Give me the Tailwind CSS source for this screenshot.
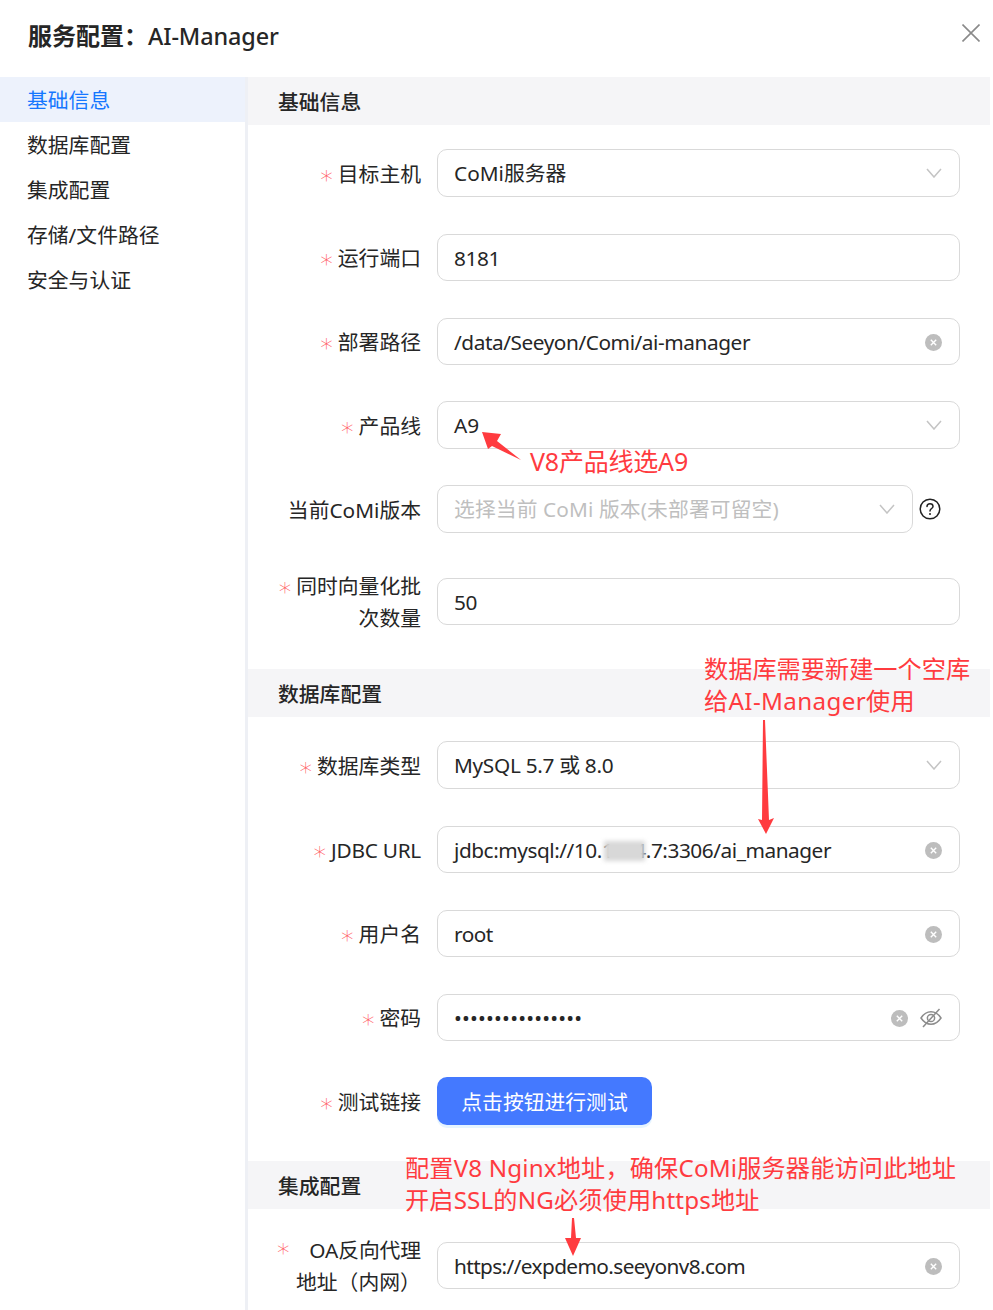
<!DOCTYPE html>
<html lang="zh-CN">
<head>
<meta charset="utf-8">
<script src="https://cdn.jsdelivr.net/npm/@tailwindcss/browser@4"></script>
</head>
<body class="bg-white">
<div class="relative w-[993px] h-[1310px] overflow-hidden bg-white text-[20.8px] leading-[32px] text-[#262626] font-['Noto_Sans','Noto_Sans_CJK_SC',sans-serif]">
  <header class="h-[77px] flex items-center justify-between pl-[28px] pr-[13px]">
    <h1 class="text-[24px] font-semibold leading-[32px] text-[#262626] -mt-[5px]">服务配置：<span class="font-medium tracking-[-0.1px] text-[23.4px]">AI-Manager</span></h1>
    <svg class="w-[18px] h-[18px] -mt-[11px]" viewBox="0 0 18 18" fill="none" stroke="#8a8a8a" stroke-width="1.6"><path d="M0.5 0.5 17.5 17.5M17.5 0.5 0.5 17.5"/></svg>
  </header>
  <div class="flex h-[1233px]">
    <nav class="w-[248px] shrink-0 border-r-[3px] border-[#eef0f5]">
      <a class="flex items-center h-[45px] pl-[27px] bg-[#edf2fc] text-[#1677ff]">基础信息</a>
      <a class="flex items-center h-[45px] pl-[27px]">数据库配置</a>
      <a class="flex items-center h-[45px] pl-[27px]">集成配置</a>
      <a class="flex items-center h-[45px] pl-[27px]">存储/文件路径</a>
      <a class="flex items-center h-[45px] pl-[27px]">安全与认证</a>
    </nav>
    <main class="w-[742px] shrink-0">
      <h2 class="h-[48px] flex items-center pl-[30px] pt-[2px] bg-[#f5f5f7] font-medium text-[20.8px]">基础信息</h2>

      <div class="flex items-center h-[48px] mt-[24px]">
        <label class="w-[173px] pt-[1px] text-right"><span class="relative top-[6px] font-['DejaVu_Sans'] text-[25px] font-light leading-none text-[#ff5a5f] mr-[5px]">*</span>目标主机</label>
        <div class="ml-[16px] w-[523px] h-full flex items-center justify-between px-[16px] border border-[#d9d9d9] rounded-[10px]">
          <span>CoMi服务器</span>
          <svg class="w-[16px] h-[10px] mr-[1px]" viewBox="0 0 16 10" fill="none" stroke="#c4c4c4" stroke-width="1.5"><path d="M1 1 8 9 15 1"/></svg>
        </div>
      </div>

      <div class="flex items-center h-[47px] mt-[37px]">
        <label class="w-[173px] pt-[1px] text-right"><span class="relative top-[6px] font-['DejaVu_Sans'] text-[25px] font-light leading-none text-[#ff5a5f] mr-[5px]">*</span>运行端口</label>
        <div class="ml-[16px] w-[523px] h-full flex items-center px-[16px] border border-[#d9d9d9] rounded-[10px] tracking-[-0.4px]">8181</div>
      </div>

      <div class="flex items-center h-[47px] mt-[37px]">
        <label class="w-[173px] pt-[1px] text-right"><span class="relative top-[6px] font-['DejaVu_Sans'] text-[25px] font-light leading-none text-[#ff5a5f] mr-[5px]">*</span>部署路径</label>
        <div class="ml-[16px] w-[523px] h-full flex items-center justify-between px-[16px] border border-[#d9d9d9] rounded-[10px]">
          <span class="tracking-[-0.43px]">/data/Seeyon/Comi/ai-manager</span>
          <svg class="w-[17px] h-[17px] mr-[1px] mt-[1px]" viewBox="0 0 17 17"><circle cx="8.5" cy="8.5" r="8.5" fill="#bdbdbd"/><path d="M5.8 5.8 11.2 11.2M11.2 5.8 5.8 11.2" stroke="#fff" stroke-width="1.4"/></svg>
        </div>
      </div>

      <div class="flex items-center h-[48px] mt-[36px]">
        <label class="w-[173px] pt-[1px] text-right"><span class="relative top-[6px] font-['DejaVu_Sans'] text-[25px] font-light leading-none text-[#ff5a5f] mr-[5px]">*</span>产品线</label>
        <div class="ml-[16px] w-[523px] h-full flex items-center justify-between px-[16px] border border-[#d9d9d9] rounded-[10px]">
          <span>A9</span>
          <svg class="w-[16px] h-[10px] mr-[1px]" viewBox="0 0 16 10" fill="none" stroke="#c4c4c4" stroke-width="1.5"><path d="M1 1 8 9 15 1"/></svg>
        </div>
      </div>

      <div class="flex items-center h-[48px] mt-[36px]">
        <label class="w-[173px] pt-[1px] text-right">当前CoMi版本</label>
        <div class="ml-[16px] w-[476px] h-full flex items-center justify-between px-[16px] border border-[#d9d9d9] rounded-[10px]">
          <span class="text-[#bfbfbf] tracking-[0.1px]">选择当前 CoMi 版本(未部署可留空)</span>
          <svg class="w-[16px] h-[10px] mr-[1px]" viewBox="0 0 16 10" fill="none" stroke="#c4c4c4" stroke-width="1.5"><path d="M1 1 8 9 15 1"/></svg>
        </div>
        <svg class="ml-[6px] w-[22px] h-[22px]" viewBox="0 0 22 22" fill="none" stroke="#222" stroke-width="1.5"><circle cx="11" cy="11" r="9.8"/><path d="M8 8.6C8 6.8 9.4 5.8 11 5.8S14 6.9 14 8.4C14 10.4 11 10.6 11 13" stroke-linecap="round"/><circle cx="11" cy="16" r="1" fill="#222" stroke="none"/></svg>
      </div>

      <div class="flex items-center h-[47px] mt-[45px]">
        <label class="w-[173px] text-right"><span class="relative top-[6px] font-['DejaVu_Sans'] text-[25px] font-light leading-none text-[#ff5a5f] mr-[5px]">*</span>同时向量化批<br>次数量</label>
        <div class="ml-[16px] w-[523px] h-full flex items-center px-[16px] border border-[#d9d9d9] rounded-[10px] tracking-[-0.4px]">50</div>
      </div>

      <h2 class="h-[48px] flex items-center pl-[30px] pt-[2px] mt-[44px] bg-[#f5f5f7] font-medium text-[20.8px]">数据库配置</h2>

      <div class="flex items-center h-[48px] mt-[24px]">
        <label class="w-[173px] pt-[1px] text-right"><span class="relative top-[6px] font-['DejaVu_Sans'] text-[25px] font-light leading-none text-[#ff5a5f] mr-[5px]">*</span>数据库类型</label>
        <div class="ml-[16px] w-[523px] h-full flex items-center justify-between px-[16px] border border-[#d9d9d9] rounded-[10px]">
          <span class="tracking-[-0.3px]">MySQL 5.7 或 8.0</span>
          <svg class="w-[16px] h-[10px] mr-[1px]" viewBox="0 0 16 10" fill="none" stroke="#c4c4c4" stroke-width="1.5"><path d="M1 1 8 9 15 1"/></svg>
        </div>
      </div>

      <div class="flex items-center h-[47px] mt-[37px]">
        <label class="w-[173px] pt-[1px] text-right"><span class="relative top-[6px] font-['DejaVu_Sans'] text-[25px] font-light leading-none text-[#ff5a5f] mr-[5px]">*</span><span class="tracking-[-0.25px]">JDBC URL</span></label>
        <div class="ml-[16px] w-[523px] h-full flex items-center justify-between px-[16px] border border-[#d9d9d9] rounded-[10px]">
          <span class="tracking-[-0.45px]">jdbc:mysql://10.1<span class="inline-block w-[21px]"></span>4.7:3306/ai_manager</span>
          <svg class="w-[17px] h-[17px] mr-[1px] mt-[1px]" viewBox="0 0 17 17"><circle cx="8.5" cy="8.5" r="8.5" fill="#bdbdbd"/><path d="M5.8 5.8 11.2 11.2M11.2 5.8 5.8 11.2" stroke="#fff" stroke-width="1.4"/></svg>
        </div>
      </div>

      <div class="flex items-center h-[47px] mt-[37px]">
        <label class="w-[173px] pt-[1px] text-right"><span class="relative top-[6px] font-['DejaVu_Sans'] text-[25px] font-light leading-none text-[#ff5a5f] mr-[5px]">*</span>用户名</label>
        <div class="ml-[16px] w-[523px] h-full flex items-center justify-between px-[16px] border border-[#d9d9d9] rounded-[10px]">
          <span class="tracking-[-0.5px]">root</span>
          <svg class="w-[17px] h-[17px] mr-[1px] mt-[1px]" viewBox="0 0 17 17"><circle cx="8.5" cy="8.5" r="8.5" fill="#bdbdbd"/><path d="M5.8 5.8 11.2 11.2M11.2 5.8 5.8 11.2" stroke="#fff" stroke-width="1.4"/></svg>
        </div>
      </div>

      <div class="flex items-center h-[47px] mt-[37px]">
        <label class="w-[173px] pt-[1px] text-right"><span class="relative top-[6px] font-['DejaVu_Sans'] text-[25px] font-light leading-none text-[#ff5a5f] mr-[5px]">*</span>密码</label>
        <div class="ml-[16px] w-[523px] h-full flex items-center justify-between px-[16px] border border-[#d9d9d9] rounded-[10px]">
          <span class="tracking-[0.2px] pt-[1px]">••••••••••••••••</span>
          <span class="flex items-center gap-[12px] mr-[2px]">
            <svg class="w-[17px] h-[17px] mt-[1px]" viewBox="0 0 17 17"><circle cx="8.5" cy="8.5" r="8.5" fill="#bdbdbd"/><path d="M5.8 5.8 11.2 11.2M11.2 5.8 5.8 11.2" stroke="#fff" stroke-width="1.4"/></svg>
            <svg class="w-[22px] h-[20px] -mr-[1px]" viewBox="0 0 22 20" fill="none" stroke="#8c8c8c" stroke-width="1.5"><path d="M1 10C4 5.500 7.500 3.800 11 3.800S18 5.500 21 10C18 14.500 14.500 16.200 11 16.200S4 14.500 1 10Z"/><circle cx="11" cy="10" r="3.600"/><path d="M3 19 19.500 1"/></svg>
          </span>
        </div>
      </div>

      <div class="flex items-center h-[48px] mt-[36px]">
        <label class="w-[173px] pt-[1px] text-right"><span class="relative top-[6px] font-['DejaVu_Sans'] text-[25px] font-light leading-none text-[#ff5a5f] mr-[5px]">*</span>测试链接</label>
        <button class="ml-[16px] w-[215px] h-full pt-[1px] rounded-[10px] bg-[#4479ff] text-white shadow-[0_3px_0_rgba(5,145,255,0.1)]">点击按钮进行测试</button>
      </div>

      <h2 class="h-[48px] flex items-center pl-[30px] pt-[2px] mt-[36px] bg-[#f5f5f7] font-medium text-[20.8px]">集成配置</h2>

      <div class="flex items-center h-[47px] mt-[33px]">
        <label class="w-[173px] text-left pl-[29px] relative"><span class="absolute left-[29px] top-[6px] font-['DejaVu_Sans'] text-[25px] font-light leading-none text-[#ff5a5f]">*</span><span class="block text-right tracking-[-0.1px]">OA反向代理</span><span class="block pl-[19px]">地址（内网）</span></label>
        <div class="ml-[16px] w-[523px] h-full flex items-center justify-between px-[16px] border border-[#d9d9d9] rounded-[10px]">
          <span class="tracking-[-0.6px]">https://expdemo.seeyonv8.com</span>
          <svg class="w-[17px] h-[17px] mr-[1px] mt-[1px]" viewBox="0 0 17 17"><circle cx="8.5" cy="8.5" r="8.5" fill="#bdbdbd"/><path d="M5.8 5.8 11.2 11.2M11.2 5.8 5.8 11.2" stroke="#fff" stroke-width="1.4"/></svg>
        </div>
      </div>
    </main>
  </div>

  <!-- screenshot annotations -->
  <div class="absolute left-[604px] top-[841px] w-[41px] h-[20px] bg-[#d8d8d8] blur-[2px]"></div>
  <svg class="absolute left-0 top-0 w-[993px] h-[1310px] pointer-events-none" viewBox="0 0 993 1310" fill="#ff3b3f">
    <polygon points="482,432 501,434 497,441 521,460 492,446 488,449"/>
    <polygon points="763,720 765,720 769,820 774,818 766,834 758,819 762,820"/>
    <polygon points="572,1218 574,1218 576,1238 581,1238 573,1256 565,1238 571,1238"/>
  </svg>
  <p class="absolute left-[530px] top-[445px] text-[25px] leading-[32px] text-[#ff3b3f] tracking-[-0.2px]">V8产品线选A9</p>
  <p class="absolute left-[704px] top-[653px] text-[24.2px] leading-[32px] text-[#ff3b3f]">数据库需要新建一个空库<br><span class="tracking-[0.35px]">给AI-Manager使用</span></p>
  <p class="absolute left-[405px] top-[1152px] text-[24.2px] leading-[32px] text-[#ff3b3f] whitespace-nowrap tracking-[0.15px]">配置V8 Nginx地址，确保CoMi服务器能访问此地址<br>开启SSL的NG必须使用https地址</p>
</div>
</body>
</html>
